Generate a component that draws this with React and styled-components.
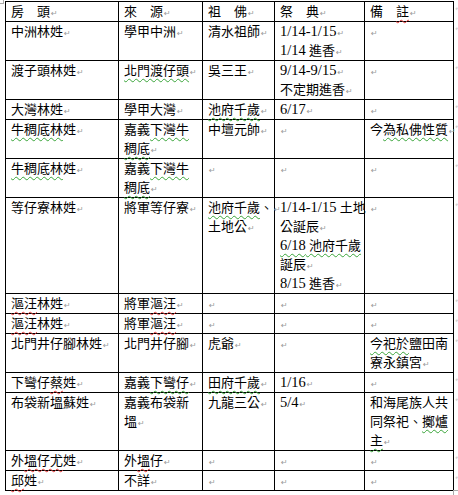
import React from 'react'
import styled, { createGlobalStyle } from 'styled-components'

const GlobalStyle = createGlobalStyle`
  html, body {
    margin: 0;
    padding: 0;
    background: #fff;
  }
`

const Page = styled.div`
  position: relative;
  width: 458px;
  height: 495px;
  padding: 1px 0 0 5px;
  box-sizing: border-box;
  overflow: hidden;
  font-family: "Liberation Serif", "Noto Sans CJK TC", serif;
  font-size: 13px;
  color: #000;
`

// crop marks at the page text boundary
const CornerTL = styled.div`
  position: absolute;
  left: 0;
  top: 0;
  width: 3px;
  height: 3px;
  border-right: 1px solid #aaa;
  border-bottom: 1px solid #aaa;
`
const CornerBR = styled.div`
  position: absolute;
  left: 453px;
  top: 490px;
  width: 6px;
  height: 6px;
  border-left: 1px solid #aaa;
  border-top: 1px solid #aaa;
`

const Table = styled.table`
  border-collapse: collapse;
  table-layout: fixed;
  width: 448px;
`

const Cell = styled.td`
  position: relative;
  border: 1px solid #000;
  padding: 0 4px 0 5px;
  vertical-align: top;
  white-space: nowrap;

  &:last-child::after {
    content: '↵';
    position: absolute;
    right: -8px;
    top: 2px;
    font-family: "DejaVu Sans", sans-serif;
    font-size: 7px;
    line-height: 10px;
    color: #c8c8c8;
  }
`

const Line = styled.div`
  height: 19px;
  line-height: 19px;
  overflow: visible;
`

const Mark = styled.span`
  font-family: "DejaVu Sans", sans-serif;
  font-size: 8px;
  line-height: 10px;
  color: #999;
  margin-left: 1px;
`

const Latin = styled.span`
  font-size: 14.5px;
  line-height: 10px;
`

const Wavy = styled.span`
  text-decoration: underline wavy ${p => (p.$red ? '#e23b3b' : '#3aa53a')};
  text-decoration-thickness: 1px;
  text-underline-offset: 3px;
`

const widths = [113, 84, 72, 90, 89]

// '\n' separates paragraphs, '|' a wrapped line, [..] green wave, {..} red wave
const rows = [
  ['房　頭', '來　源', '祖　佛', '祭　典', '備　{註}'],
  ['中洲林姓', '學甲中洲', '清水祖師', '1/14-1/15\n1/14 進香', ''],
  ['渡子頭林姓', '[北門渡仔頭]', '吳三王', '9/14-9/15\n不定期進香', ''],
  ['大灣林姓', '學甲大灣', '[池府千歲]', '6/17', ''],
  ['[牛稠底林]姓', '嘉義[下灣牛]|[稠底]', '中壇元帥', '', '今[為私佛性質]'],
  ['[牛稠底林]姓', '嘉義[下灣牛]|[稠底]', '', '', ''],
  ['等仔寮林姓', '將軍等仔寮', '[池府千歲]、\n土地公', '1/14-1/15 土地|公誕辰\n[6/18 池府千歲]|誕辰\n8/15 進香', ''],
  ['{漚汪}林姓', '將軍{漚汪}', '', '', ''],
  ['{漚汪}林姓', '將軍{漚汪}', '', '', ''],
  ['北門井仔腳林姓', '北門井仔腳', '虎爺', '', '[今祀於]鹽田南|寮永鎮宮'],
  ['下彎仔{蔡}姓', '嘉義[下彎仔]', '[田府千歲]', '1/16', ''],
  ['布袋新塭蘇姓', '嘉義布袋新|塭', '九龍三公', '5/4', '和海尾族人共|同祭祀、[擲爐]|[主]'],
  ['外{塭仔尤}姓', '外{塭}仔', '', '', ''],
  ['{邱}姓', '不詳', '', '', ''],
]

function Script({ text }) {
  return text.split(/([\x21-\x7e]+(?: [\x21-\x7e]+)*)/).map((part, i) =>
    /[\x21-\x7e]/.test(part) ? <Latin key={i}>{part}</Latin> : part
  )
}

function Runs({ text }) {
  return text.split(/(\[[^\]]*\]|\{[^}]*\})/).filter(Boolean).map((part, i) => {
    if (part[0] === '[') return <Wavy key={i}><Script text={part.slice(1, -1)} /></Wavy>
    if (part[0] === '{') return <Wavy key={i} $red><Script text={part.slice(1, -1)} /></Wavy>
    return <Script key={i} text={part} />
  })
}

function CellBody({ value }) {
  return value.split('\n').flatMap((para, i) => {
    const lines = para.split('|')
    return lines.map((line, j) => (
      <Line key={`${i}-${j}`}>
        <Runs text={line} />
        {j === lines.length - 1 && <Mark>↵</Mark>}
      </Line>
    ))
  })
}

export default function App() {
  return (
    <Page>
      <GlobalStyle />
      <CornerTL />
      <Table>
        <colgroup>
          {widths.map((w, i) => <col key={i} style={{ width: w }} />)}
        </colgroup>
        <tbody>
          {rows.map((row, r) => (
            <tr key={r}>
              {row.map((value, c) => (
                <Cell key={c}><CellBody value={value} /></Cell>
              ))}
            </tr>
          ))}
        </tbody>
      </Table>
      <CornerBR />
    </Page>
  )
}
